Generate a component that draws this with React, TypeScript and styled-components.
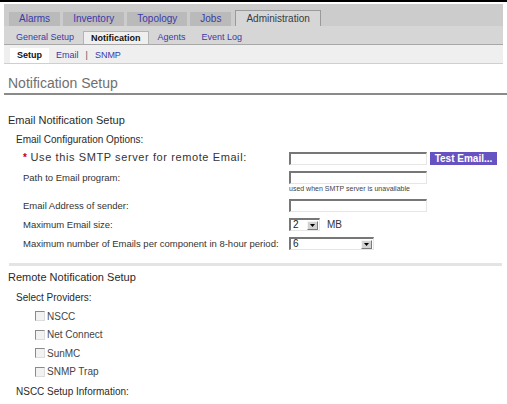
import React from 'react'
import styled, { createGlobalStyle } from 'styled-components'

const GlobalStyle = createGlobalStyle`
  body {
    margin: 0;
    background: #ffffff;
    font-family: "Liberation Sans", Arial, sans-serif;
    color: #333333;
  }
`

const Page = styled.div`
  width: 507px;
  border-top: 2px solid #000000;
`

const TabBar = styled.div`
  display: flex;
  align-items: flex-end;
  gap: 3px;
  height: 22px;
  margin: 2px 4px 0;
  padding-left: 5px;
  background: #cccccc;
`

const Tab = styled.div<{ $active?: boolean }>`
  padding: 0 10px;
  font-size: 10px;
  line-height: ${({ $active }) => ($active ? '15px' : '14px')};
  color: ${({ $active }) => ($active ? '#3a3a3a' : '#3a3aa8')};
  background: ${({ $active }) => ($active ? '#d6d6d6' : '#bababa')};
  border: ${({ $active }) => ($active ? '1px solid #9a9a9a' : 'none')};
  border-bottom: none;
  margin-left: ${({ $active }) => ($active ? '1px' : '0')};
`

const SubBar = styled.div`
  display: flex;
  align-items: flex-end;
  gap: 2px;
  height: 18px;
  margin: 0 4px;
  padding-left: 5px;
  background: #d6d6d6;
  border-bottom: 1px solid #a8a8a8;
`

const SubTab = styled.div<{ $active?: boolean }>`
  padding: 0 7px;
  font-size: 9px;
  line-height: ${({ $active }) => ($active ? '12px' : '13px')};
  font-weight: ${({ $active }) => ($active ? 'bold' : 'normal')};
  color: ${({ $active }) => ($active ? '#111111' : '#3a3aa8')};
  background: ${({ $active }) => ($active ? '#efefef' : 'transparent')};
  border: ${({ $active }) => ($active ? '1px solid #b4b4b4' : 'none')};
  border-bottom: none;
`

const LeafBar = styled.div`
  display: flex;
  align-items: flex-end;
  height: 18px;
  margin: 0 4px;
  padding-left: 6px;
  background: #efefef;
  border-bottom: 1px solid #cfcfcf;
`

const LeafTab = styled.div<{ $active?: boolean }>`
  padding: 0 7px;
  font-size: 9px;
  line-height: 15px;
  font-weight: ${({ $active }) => ($active ? 'bold' : 'normal')};
  color: ${({ $active }) => ($active ? '#111111' : '#3a3aa8')};
  background: ${({ $active }) => ($active ? '#ffffff' : 'transparent')};
`

const LeafDivider = styled.span`
  font-size: 9px;
  line-height: 15px;
  color: #555555;
`

const PageTitle = styled.h1`
  margin: 11px 0 0 4px;
  padding: 0 0 1px 4px;
  font-size: 14px;
  font-weight: normal;
  line-height: 17px;
  color: #707070;
  border-bottom: 2px solid #8a8a8a;
`

const SectionTitle = styled.h2<{ $top: number }>`
  margin: ${({ $top }) => $top}px 0 0 8px;
  font-size: 11px;
  font-weight: normal;
  line-height: 13px;
  color: #2a2a2a;
`

const GroupTitle = styled.h3<{ $top: number }>`
  margin: ${({ $top }) => $top}px 0 0 16px;
  font-size: 10px;
  font-weight: normal;
  line-height: 12px;
  color: #2a2a2a;
`

const Form = styled.div`
  display: grid;
  grid-template-columns: 266px auto;
  row-gap: 6px;
  margin-top: 6px;
  padding-left: 23px;
`

const Label = styled.div<{ $large?: boolean }>`
  align-self: start;
  font-size: ${({ $large }) => ($large ? '11px' : '9.5px')};
  letter-spacing: ${({ $large }) => ($large ? '0.6px' : '0')};
  line-height: ${({ $large }) => ($large ? '11px' : '13px')};
  color: #333333;
  white-space: nowrap;
`

const Required = styled.span`
  margin-right: 3px;
  font-size: 10px;
  font-weight: bold;
  color: #cc0000;
  vertical-align: top;
`

const Field = styled.div`
  display: flex;
  flex-direction: column;
  align-items: flex-start;
`

const FieldLine = styled.div`
  display: flex;
  align-items: center;
  gap: 3px;
`

const TextBox = styled.div`
  box-sizing: border-box;
  width: 138px;
  height: 13px;
  background: #ffffff;
  border-top: 2px solid #777777;
  border-left: 2px solid #777777;
  border-bottom: 1px solid #e6e6e6;
  border-right: 1px solid #e6e6e6;
`

const Note = styled.div`
  margin-top: 1px;
  font-size: 7px;
  line-height: 8px;
  color: #444444;
`

const Button = styled.div`
  box-sizing: border-box;
  width: 67px;
  height: 13px;
  font-size: 10px;
  font-weight: bold;
  line-height: 13px;
  text-align: center;
  color: #ffffff;
  background: #6752c2;
`

const SelectBox = styled.div<{ $width: number }>`
  box-sizing: border-box;
  display: flex;
  align-items: center;
  justify-content: space-between;
  width: ${({ $width }) => $width}px;
  height: 13px;
  padding-right: 1px;
  background: #ffffff;
  border-top: 2px solid #777777;
  border-left: 2px solid #777777;
  border-bottom: 1px solid #e6e6e6;
  border-right: 1px solid #e6e6e6;
`

const SelectValue = styled.span`
  padding-left: 2px;
  font-size: 10px;
  line-height: 10px;
  color: #222222;
`

const SelectArrow = styled.span`
  box-sizing: border-box;
  display: flex;
  align-items: center;
  justify-content: center;
  width: 11px;
  height: 9px;
  background: #d2d2d2;
  border: 1px solid;
  border-color: #f4f4f4 #7a7a7a #7a7a7a #f4f4f4;
`

const Unit = styled.span`
  margin-left: 4px;
  font-size: 10px;
  color: #333333;
`

const Separator = styled.div`
  height: 3px;
  margin: 13px 5px 0 9px;
  background: #e4e4e4;
`

const Providers = styled.div`
  display: flex;
  flex-direction: column;
  gap: 6.5px;
  margin-top: 6px;
  padding-left: 35px;
`

const Provider = styled.label`
  display: flex;
  align-items: center;
  gap: 2px;
  height: 12px;
  font-size: 10px;
  color: #444444;
`

const CheckBox = styled.span`
  box-sizing: border-box;
  width: 10px;
  height: 10px;
  background: #f2f2f2;
  border: 1px solid;
  border-color: #8a8a8a #dcdcdc #dcdcdc #8a8a8a;
`

const Select: React.FC<{ value: string; width: number }> = ({ value, width }) => (
  <SelectBox $width={width}>
    <SelectValue>{value}</SelectValue>
    <SelectArrow>
      <svg width="5" height="3" viewBox="0 0 5 3">
        <path d="M0 0h5L2.5 3z" fill="#000000" />
      </svg>
    </SelectArrow>
  </SelectBox>
)

const tabs = ['Alarms', 'Inventory', 'Topology', 'Jobs', 'Administration']
const subTabs = ['General Setup', 'Notification', 'Agents', 'Event Log']
const providers = ['NSCC', 'Net Connect', 'SunMC', 'SNMP Trap']

const App: React.FC = () => (
  <>
    <GlobalStyle />
    <Page>
      <TabBar>
        {tabs.map((t) => (
          <Tab key={t} $active={t === 'Administration'}>
            {t}
          </Tab>
        ))}
      </TabBar>
      <SubBar>
        {subTabs.map((t) => (
          <SubTab key={t} $active={t === 'Notification'}>
            {t}
          </SubTab>
        ))}
      </SubBar>
      <LeafBar>
        <LeafTab $active>Setup</LeafTab>
        <LeafTab>Email</LeafTab>
        <LeafDivider>|</LeafDivider>
        <LeafTab>SNMP</LeafTab>
      </LeafBar>

      <PageTitle>Notification Setup</PageTitle>

      <SectionTitle $top={19}>Email Notification Setup</SectionTitle>
      <GroupTitle $top={7}>Email Configuration Options:</GroupTitle>
      <Form>
        <Label $large>
          <Required>*</Required>Use this SMTP server for remote Email:
        </Label>
        <FieldLine>
          <TextBox />
          <Button>Test Email...</Button>
        </FieldLine>

        <Label>Path to Email program:</Label>
        <Field>
          <TextBox />
          <Note>used when SMTP server is unavailable</Note>
        </Field>

        <Label>Email Address of sender:</Label>
        <Field>
          <TextBox />
        </Field>

        <Label>Maximum Email size:</Label>
        <FieldLine>
          <Select value="2" width={31} />
          <Unit>MB</Unit>
        </FieldLine>

        <Label>Maximum number of Emails per component in 8-hour period:</Label>
        <FieldLine>
          <Select value="6" width={85} />
        </FieldLine>
      </Form>

      <Separator />

      <SectionTitle $top={5}>Remote Notification Setup</SectionTitle>
      <GroupTitle $top={8}>Select Providers:</GroupTitle>
      <Providers>
        {providers.map((p) => (
          <Provider key={p}>
            <CheckBox />
            {p}
          </Provider>
        ))}
      </Providers>
      <GroupTitle $top={8}>NSCC Setup Information:</GroupTitle>
    </Page>
  </>
)

export default App
